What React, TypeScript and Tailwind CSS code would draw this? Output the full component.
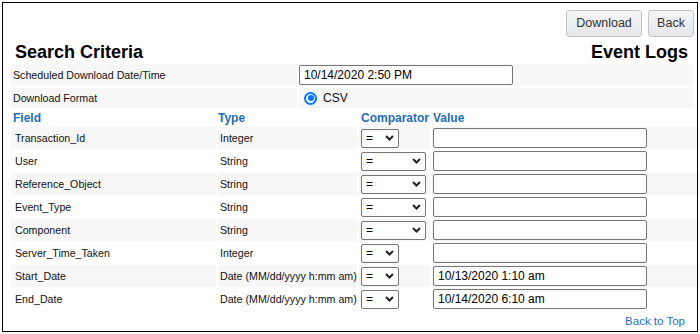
import React from "react";

type Field = {
  name: string;
  type: string;
  wide: boolean;
  value: string;
};

const fields: Field[] = [
  { name: "Transaction_Id", type: "Integer", wide: false, value: "" },
  { name: "User", type: "String", wide: true, value: "" },
  { name: "Reference_Object", type: "String", wide: true, value: "" },
  { name: "Event_Type", type: "String", wide: true, value: "" },
  { name: "Component", type: "String", wide: true, value: "" },
  { name: "Server_Time_Taken", type: "Integer", wide: false, value: "" },
  { name: "Start_Date", type: "Date (MM/dd/yyyy h:mm am)", wide: false, value: "10/13/2020 1:10 am" },
  { name: "End_Date", type: "Date (MM/dd/yyyy h:mm am)", wide: false, value: "10/14/2020 6:10 am" },
];

function Chevron() {
  return (
    <svg width="9" height="6" viewBox="0 0 9 6" className="shrink-0">
      <polyline points="1,1 4.5,4.5 8,1" fill="none" stroke="#222" strokeWidth="2" />
    </svg>
  );
}

function Comparator({ wide }: { wide: boolean }) {
  return (
    <div
      className={
        "flex h-[19px] items-center justify-between rounded-[2px] border border-[#767676] bg-white pl-[4px] pr-[4px] text-[12px] text-black " +
        (wide ? "w-[65px]" : "w-[38px]")
      }
    >
      <span className="leading-none">=</span>
      <Chevron />
    </div>
  );
}

function TextBox({ value }: { value: string }) {
  return (
    <div className="flex h-[20px] w-[214px] items-center rounded-[2px] border border-[#767676] bg-white pl-[4px] text-[12px] text-black">
      {value}
    </div>
  );
}

export default function App() {
  return (
    <div className="p-[2px] font-['Liberation_Sans',Arial,sans-serif] text-[#111]">
      <div className="h-[330px] border border-black bg-white">
        {/* Actions */}
        <div className="flex justify-end gap-[6px] pr-[3px] pt-[7px]">
          <button className="h-[27px] w-[76px] rounded-[3px] border border-[#c3c7cb] bg-linear-to-b from-[#f3f4f5] to-[#e5e7ea] text-[12.5px] text-[#333]">
            Download
          </button>
          <button className="h-[27px] w-[46px] rounded-[3px] border border-[#c3c7cb] bg-linear-to-b from-[#f3f4f5] to-[#e5e7ea] text-[12.5px] text-[#333]">
            Back
          </button>
        </div>

        {/* Titles */}
        <div className="mt-[5px] flex justify-between pl-[12px] pr-[9px] text-[18px] font-bold leading-[21px] text-black">
          <span>Search Criteria</span>
          <span>Event Logs</span>
        </div>

        {/* Download options */}
        <div className="ml-[8px] mr-[4px] mt-[1px] flex flex-col gap-[2px] text-[8pt]">
          <div className="grid h-[22px] grid-cols-[286px_1fr] gap-x-[2px]">
            <div className="flex items-center bg-[#f7f7f7] pl-[2px]">Scheduled Download Date/Time</div>
            <div className="flex items-center bg-[#f7f7f7]">
              <TextBox value="10/14/2020 2:50 PM" />
            </div>
          </div>
          <div className="grid h-[20px] grid-cols-[286px_1fr] gap-x-[2px]">
            <div className="flex items-center bg-[#f7f7f7] pl-[2px]">Download Format</div>
            <div className="flex items-center gap-[6px] bg-[#f7f7f7] pl-[5px]">
              <span className="flex h-[13px] w-[13px] items-center justify-center rounded-full border-2 border-[#0075ff] bg-white">
                <span className="h-[6px] w-[6px] rounded-full bg-[#0075ff]" />
              </span>
              <span className="text-[12px]">CSV</span>
            </div>
          </div>
        </div>

        {/* Filter fields */}
        <div className="ml-[8px] flex flex-col gap-y-[1px]">
          <div className="grid h-[18px] grid-cols-[205px_139px_71px_1fr] items-end gap-x-[2px] pb-[1px] text-[12px] font-bold leading-[14px] text-[#1f6db3]">
            <span className="pl-[2px]">Field</span>
            <span>Type</span>
            <span className="pl-[2px]">Comparator</span>
            <span className="pl-[1px]">Value</span>
          </div>
          {fields.map((f, i) => {
            const bg = i % 2 === 0 ? "bg-[#f7f7f7]" : "bg-white";
            return (
              <div key={f.name} className="grid h-[22px] grid-cols-[205px_139px_71px_1fr] gap-x-[2px] text-[8pt]">
                <div className={"flex items-center pb-[1px] pl-[4px] " + bg}>{f.name}</div>
                <div className={"flex items-center whitespace-nowrap pb-[1px] pl-[2px] " + bg}>{f.type}</div>
                <div className={"flex items-center pl-[2px] " + bg}>
                  <Comparator wide={f.wide} />
                </div>
                <div className={"flex items-center pl-[1px] " + bg}>
                  <TextBox value={f.value} />
                </div>
              </div>
            );
          })}
        </div>

        <div className="mt-[4px] flex justify-end pr-[12px]">
          <a href="#" className="text-[11.5px] leading-[14px] text-[#2a6ebb]">
            Back to Top
          </a>
        </div>
      </div>
    </div>
  );
}
